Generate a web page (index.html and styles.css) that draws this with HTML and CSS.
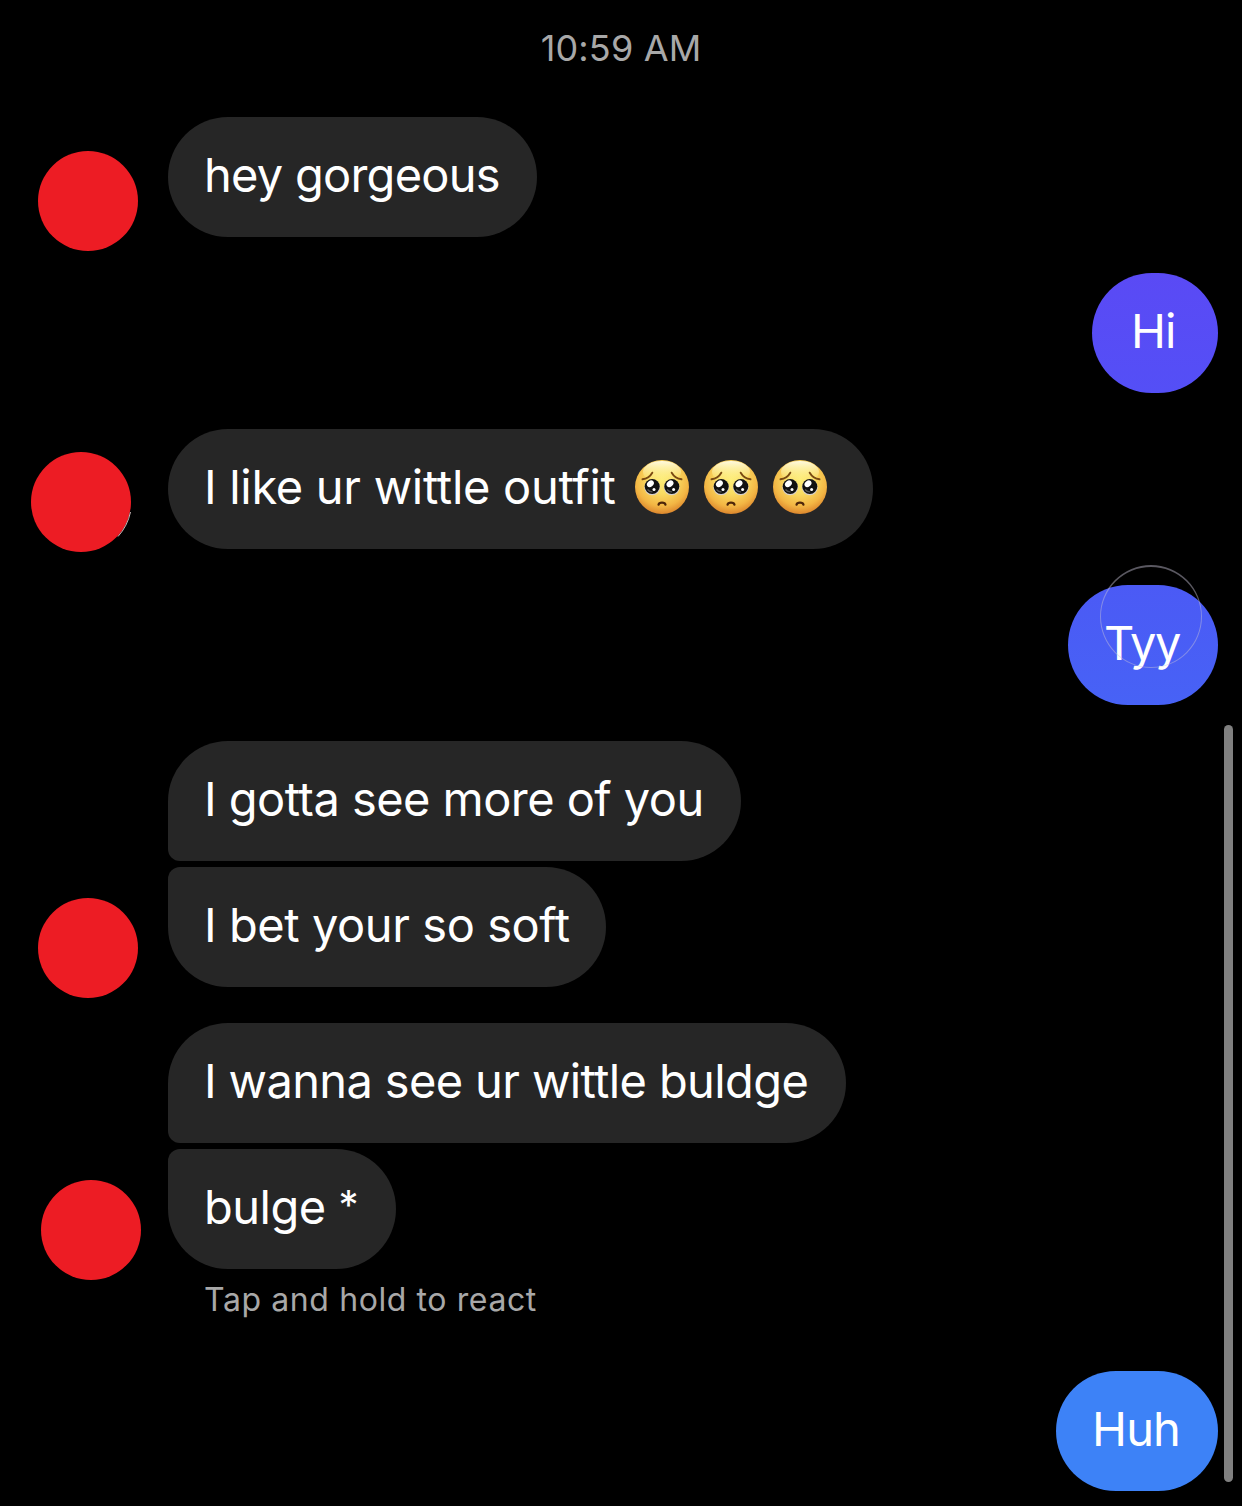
FILE: index.html
```html
<!DOCTYPE html>
<html lang="en">
<head>
<meta charset="utf-8">
<title>Chat</title>
<link rel="stylesheet" href="styles.css">
</head>
<body>
<svg class="defs" width="0" height="0" aria-hidden="true">
  <defs>
    <radialGradient id="face" cx="50%" cy="36%" r="66%">
      <stop offset="0" stop-color="#fdec76"/>
      <stop offset=".4" stop-color="#fadb62"/>
      <stop offset=".75" stop-color="#f3b644"/>
      <stop offset="1" stop-color="#d9802a"/>
    </radialGradient>
    <linearGradient id="shine" x1="0" y1="0" x2="0" y2="1">
      <stop offset="0" stop-color="#fffff0" stop-opacity=".9"/>
      <stop offset="1" stop-color="#fff68a" stop-opacity="0"/>
    </linearGradient>
    <symbol id="pleading" viewBox="0 0 54 54">
      <circle cx="27" cy="27" r="27" fill="url(#face)"/>
      <ellipse cx="27" cy="12" rx="19" ry="11" fill="url(#shine)"/>
      <path d="M7.500 19.300Q14 18.500 17.300 12.700M46.500 19.300Q40 18.500 36.700 12.700" fill="none" stroke="#7a4a12" stroke-width="1.900" stroke-linecap="round"/>
      <circle cx="17.200" cy="27.300" r="7.900" fill="#d8d0cc"/>
      <circle cx="36.800" cy="27.300" r="7.900" fill="#d8d0cc"/>
      <circle cx="17.200" cy="26.500" r="7.500" fill="#111"/>
      <circle cx="36.800" cy="26.500" r="7.500" fill="#111"/>
      <path d="M12.500 29.500a5.800 5.800 0 0 0 5 2.300M32.100 29.500a5.800 5.800 0 0 0 5 2.300" fill="none" stroke="#555" stroke-width="1.300"/>
      <ellipse cx="15.400" cy="23.800" rx="3.800" ry="2.900" transform="rotate(-40 15.400 23.800)" fill="#fff"/>
      <ellipse cx="35" cy="23.800" rx="3.800" ry="2.900" transform="rotate(-40 35 23.800)" fill="#fff"/>
      <circle cx="19" cy="29.500" r="1.500" fill="#fff"/>
      <circle cx="38.600" cy="29.500" r="1.500" fill="#fff"/>
      <path d="M23.500 44.700C24.200 42 29.800 42 30.500 44.700" fill="none" stroke="#4e260a" stroke-width="2.200" stroke-linecap="round"/>
    </symbol>
  </defs>
</svg>
<main class="thread">
  <time class="timestamp">10:59 AM</time>

  <div class="row">
    <span class="avatar"></span>
    <p class="bubble bubble--hey">hey gorgeous</p>
  </div>

  <div class="row row--mine">
    <p class="bubble bubble--hi">Hi</p>
  </div>

  <div class="row">
    <span class="avatar avatar--outfit"><svg class="avatar-edge" viewBox="0 0 100 100"><path d="M99.500 60Q96.500 74 87 84.500" fill="none" stroke="#c8b8b8" stroke-width="1"/></svg></span>
    <p class="bubble bubble--outfit"><span>I like ur wittle outfit</span>
      <span class="emojis" role="img" aria-label="pleading faces"><svg class="emoji"><use href="#pleading"/></svg><svg class="emoji"><use href="#pleading"/></svg><svg class="emoji"><use href="#pleading"/></svg></span>
    </p>
  </div>

  <div class="row row--mine">
    <p class="bubble bubble--tyy">Tyy<span class="touch-ring"></span></p>
  </div>

  <div class="row">
    <span class="avatar avatar--soft"></span>
    <div class="group">
      <p class="bubble bubble--first bubble--gotta">I gotta see more of you</p>
      <p class="bubble bubble--last bubble--soft">I bet your so soft</p>
    </div>
  </div>

  <div class="row">
    <span class="avatar avatar--bulge"></span>
    <div class="group">
      <p class="bubble bubble--first bubble--wanna">I wanna see ur wittle buldge</p>
      <p class="bubble bubble--last bubble--bulge"><span>bulge <span class="star">*</span></span></p>
    </div>
  </div>
  <p class="hint">Tap and hold to react</p>

  <div class="row row--mine">
    <p class="bubble bubble--huh">Huh</p>
  </div>
</main>
<div class="scrollbar"></div>
</body>
</html>
```
FILE: styles.css
```css
* { box-sizing: border-box; }

body {
  margin: 0;
  background: #000;
  color: #fff;
  font-family: Inter, "Liberation Sans", sans-serif;
}

p { margin: 0; }

.defs { position: absolute; }

.thread {
  height: 1506px;
  padding-right: 24px;
  display: flex;
  flex-direction: column;
  overflow: hidden;
}

.timestamp {
  height: 81px;
  margin: 0 -24px 0 0;
  padding: 28px 0 0;
  text-align: center;
  font-size: 36px;
  line-height: 41px;
  letter-spacing: 0.15px;
  color: #a8a8a8;
}

.row {
  display: flex;
  align-items: flex-end;
  margin-top: 36px;
}

.row--mine { justify-content: flex-end; }

.avatar {
  flex: none;
  width: 100px;
  height: 100px;
  margin: 0 30px -14px 38px;
  border-radius: 50%;
  background: #ed1c24;
}

.avatar--outfit { margin: 0 36.6px -3px 31.4px; }
.avatar--soft { margin-bottom: -11px; }
.avatar--bulge { margin: 0 27px -11.400px 41px; }

.avatar-edge {
  display: block;
  width: 100px;
  height: 100px;
}

.group {
  display: flex;
  flex-direction: column;
  gap: 6px;
}

.bubble {
  display: flex;
  align-items: center;
  height: 120px;
  padding: 0 0 6px 36px;
  border-radius: 60px;
  background: #262626;
  font-size: 47px;
  line-height: 57px;
  white-space: nowrap;
}

.bubble--first { border-bottom-left-radius: 12px; }
.bubble--last { border-top-left-radius: 12px; }

.bubble--hey { width: 369px; letter-spacing: -0.75px; }
.bubble--outfit { width: 705px; letter-spacing: -0.3px; }
.bubble--gotta { width: 573px; letter-spacing: -0.55px; }
.bubble--soft { width: 438px; letter-spacing: -0.43px; }
.bubble--wanna { width: 678px; letter-spacing: -0.63px; }
.bubble--bulge { width: 228px; letter-spacing: -0.5px; }

.star {
  font-size: 40px;
  line-height: 1;
  vertical-align: 5px;
}

.bubble--hi {
  width: 126px;
  padding-left: 39px;
  letter-spacing: -1px;
  background: linear-gradient(#5a4af5, #544ff6);
}

.bubble--tyy {
  position: relative;
  width: 150px;
  letter-spacing: -1.4px;
  background: linear-gradient(#4b5af5, #4762f6);
}

.bubble--huh {
  width: 162px;
  letter-spacing: -0.8px;
  background: #3d82f7;
}

.emojis {
  display: flex;
  gap: 15px;
  margin: 2px 0 0 19px;
}

.emoji {
  width: 54px;
  height: 54px;
}

.touch-ring {
  position: absolute;
  left: 32px;
  top: -20px;
  width: 102px;
  height: 103px;
  border: 1px solid rgba(200, 195, 215, 0.45);
  border-top-width: 2px;
  border-radius: 50%;
}

.hint {
  height: 66px;
  padding: 11px 0 0 204px;
  font-size: 32px;
  line-height: 40px;
  letter-spacing: 0.6px;
  color: #a8a8a8;
}

.scrollbar {
  position: absolute;
  left: 1224px;
  top: 725px;
  width: 9px;
  height: 757px;
  border-radius: 5px;
  background: #808080;
}
```
